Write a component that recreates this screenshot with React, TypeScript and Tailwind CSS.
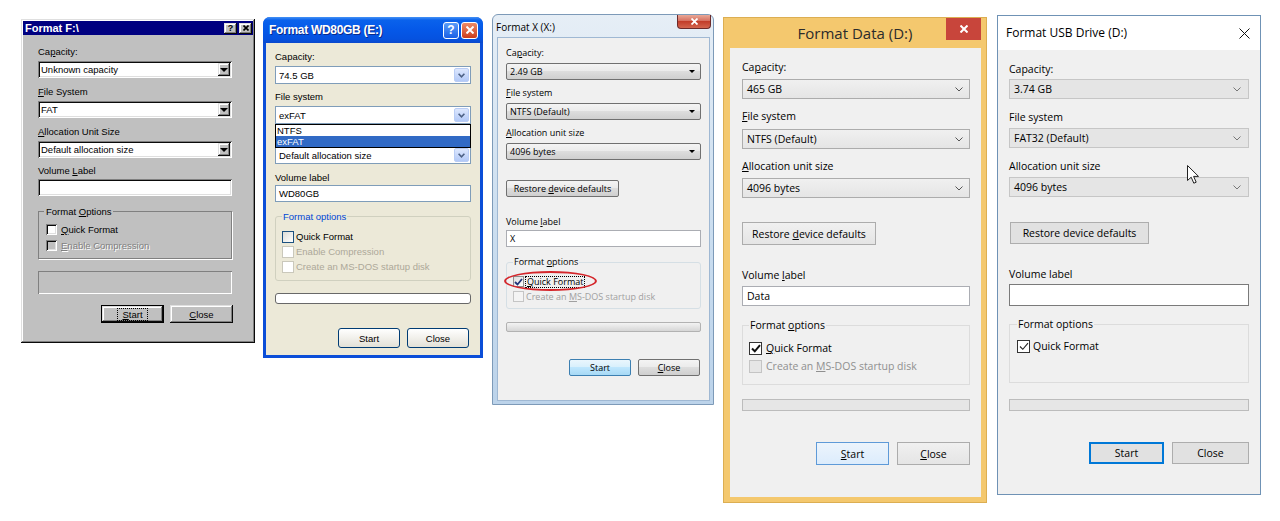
import React from "react";

type Kids = { children?: React.ReactNode };

const U = ({ children }: Kids) => (
  <span className="underline decoration-1 underline-offset-[1px]">{children}</span>
);

// classic 3D bevels
const raised98 =
  "shadow-[inset_-1px_-1px_#0a0a0a,inset_1px_1px_#dfdfdf,inset_-2px_-2px_#808080,inset_2px_2px_#ffffff]";
const sunken98 =
  "shadow-[inset_1px_1px_#808080,inset_-1px_-1px_#ffffff,inset_2px_2px_#0a0a0a,inset_-2px_-2px_#dfdfdf]";
const gray98 = "text-[#808080] [text-shadow:1px_1px_0_#ffffff]";

function Chevron({ color = "#444" }: { color?: string }) {
  return (
    <svg width="8" height="5" viewBox="0 0 8 5">
      <path d="M0.5 0.5 L4 4 L7.5 0.5" stroke={color} strokeWidth="1" fill="none" />
    </svg>
  );
}

function CloseGlyph({ size = 7, color = "#fff", width = 1.5 }: { size?: number; color?: string; width?: number }) {
  return (
    <svg width={size} height={size} viewBox={`0 0 ${size} ${size}`}>
      <path d={`M0.5 0.5 L${size - 0.5} ${size - 0.5} M${size - 0.5} 0.5 L0.5 ${size - 0.5}`} stroke={color} strokeWidth={width} />
    </svg>
  );
}

/* ---------- Windows 98 ---------- */

function Select98({ value }: { value: string }) {
  return (
    <div className={`h-[17px] bg-white flex items-center pl-[3px] pr-[2px] ${sunken98}`}>
      <span>{value}</span>
      <div className={`ml-auto w-[12px] h-[13px] bg-[#c0c0c0] flex items-center justify-center ${raised98}`}>
        <div className="w-0 h-0 border-x-[4px] border-x-transparent border-t-[4px] border-t-black" />
      </div>
    </div>
  );
}

function Check98({ disabled }: { disabled?: boolean }) {
  return <div className={`w-[11px] h-[11px] shrink-0 ${disabled ? "bg-[#c0c0c0]" : "bg-white"} ${sunken98}`} />;
}

function TitleBtn98({ children }: Kids) {
  return (
    <div className={`w-[13px] h-[11px] bg-[#c0c0c0] flex items-center justify-center text-[9px] font-bold leading-none text-black ${raised98}`}>
      {children}
    </div>
  );
}

function Win98Dialog() {
  return (
    <div className={`mt-[19px] ml-[21px] w-[234px] h-[324px] shrink-0 bg-[#c0c0c0] p-[2px] flex flex-col font-['Liberation_Sans',Arial,sans-serif] text-[9.5px] leading-[13px] text-black ${raised98}`}>
      <div className="h-[14px] bg-[#000080] flex items-center pl-[2px] pr-[1px]">
        <span className="text-white font-bold text-[11px] leading-[14px]">Format F:\</span>
        <div className="ml-auto flex gap-[2px]">
          <TitleBtn98>?</TitleBtn98>
          <TitleBtn98>
            <CloseGlyph size={6} color="#000" width={1.6} />
          </TitleBtn98>
        </div>
      </div>
      <div className="pl-[15px] w-[209px] flex flex-col">
        <div className="mt-[10px]">
          Ca<U>p</U>acity:
        </div>
        <div className="mt-[3px]">
          <Select98 value="Unknown capacity" />
        </div>
        <div className="mt-[7px]">
          <U>F</U>ile System
        </div>
        <div className="mt-[3px]">
          <Select98 value="FAT" />
        </div>
        <div className="mt-[7px]">
          <U>A</U>llocation Unit Size
        </div>
        <div className="mt-[3px]">
          <Select98 value="Default allocation size" />
        </div>
        <div className="mt-[6px]">
          Volume <U>L</U>abel
        </div>
        <div className={`mt-[2px] h-[17px] bg-white ${sunken98}`} />
        <fieldset className="mt-[9px] border border-[#808080] shadow-[1px_1px_0_#ffffff] pl-[7px] pb-[6px]">
          <legend className="-ml-[2px] px-[2px]">
            Format <U>O</U>ptions
          </legend>
          <div className="mt-[5px] flex items-center gap-[4px]">
            <Check98 />
            <span>
              <U>Q</U>uick Format
            </span>
          </div>
          <div className="mt-[3px] flex items-center gap-[4px]">
            <Check98 disabled />
            <span className={gray98}>
              <U>E</U>nable Compression
            </span>
          </div>
        </fieldset>
        <div className="mt-[12px] h-[23px] shadow-[inset_1px_1px_#808080,inset_-1px_-1px_#ffffff]" />
        <div className="mt-[11px] flex justify-end gap-[6px] -mr-[1px]">
          <div className={`w-[63px] h-[18px] border border-black bg-[#c0c0c0] flex items-center justify-center ${raised98}`}>
            <span className="border border-dotted border-black px-[4px] leading-[11px]">
              <U>S</U>tart
            </span>
          </div>
          <div className={`w-[63px] h-[18px] bg-[#c0c0c0] flex items-center justify-center ${raised98}`}>
            <span>
              <U>C</U>lose
            </span>
          </div>
        </div>
      </div>
    </div>
  );
}

/* ---------- Windows XP ---------- */

function SelectXP({ value }: { value: string }) {
  return (
    <div className="h-[18px] bg-white border border-[#7f9db9] flex items-center pl-[3px] pr-[1px]">
      <span>{value}</span>
      <div className="ml-auto w-[15px] h-[14px] rounded-[2px] border border-[#b9cdf5] bg-linear-to-b from-[#dde7fd] to-[#b3c9f7] flex items-center justify-center">
        <svg width="7" height="5" viewBox="0 0 7 5">
          <path d="M0.6 0.8 L3.5 3.8 L6.4 0.8" stroke="#4d6185" strokeWidth="1.6" fill="none" />
        </svg>
      </div>
    </div>
  );
}

function CheckXP({ disabled }: { disabled?: boolean }) {
  return (
    <div
      className={`w-[12px] h-[12px] shrink-0 border ${
        disabled ? "border-[#cac8bb] bg-white" : "border-[#1c5180] bg-linear-to-br from-[#dcdcd7] to-white"
      }`}
    />
  );
}

function ButtonXP({ children }: Kids) {
  return (
    <div className="w-[62px] h-[20px] rounded-[3px] border border-[#003c74] bg-linear-to-b from-white to-[#e3e1d7] flex items-center justify-center">
      {children}
    </div>
  );
}

function XPDialog() {
  return (
    <div className="mt-[17px] ml-[8px] w-[220px] h-[341px] shrink-0 rounded-t-[7px] bg-[#0b4ed8] flex flex-col overflow-hidden font-['Liberation_Sans',Tahoma,sans-serif] text-[9.5px] leading-[13px] text-black">
      <div className="h-[26px] shrink-0 flex items-center pl-[6px] pr-[5px] bg-[linear-gradient(to_bottom,#4592f5_0%,#0a62ec_12%,#0558e8_50%,#0552e0_85%,#0a48cc_100%)]">
        <span className="text-white font-bold text-[12px] tracking-[-0.3px] [text-shadow:1px_1px_0_#0a2a8a]">
          Format WD80GB (E:)
        </span>
        <div className="ml-auto flex gap-[2px]">
          <div className="w-[16px] h-[17px] rounded-[3px] border border-white bg-linear-to-b from-[#5a9cf8] to-[#1a5fe6] flex items-center justify-center text-white font-bold text-[12px] leading-none">
            ?
          </div>
          <div className="w-[17px] h-[17px] rounded-[3px] border border-white bg-linear-to-b from-[#ee8a66] to-[#cc3a18] flex items-center justify-center">
            <CloseGlyph size={8} width={2} />
          </div>
        </div>
      </div>
      <div className="mx-[3px] mb-[3px] flex-1 bg-[#ece9d8] pl-[9px] flex flex-col">
        <div className="w-[196px] flex flex-col">
          <div className="mt-[7px]">Capacity:</div>
          <div className="mt-[3px]">
            <SelectXP value="74.5 GB" />
          </div>
          <div className="mt-[6px]">File system</div>
          <div className="mt-[3px] relative z-10">
            <SelectXP value="exFAT" />
            {/* open drop-down list, covering the next label */}
            <div className="absolute left-0 right-0 top-full border border-black bg-white">
              <div className="h-[11px] leading-[11px] pl-[1px]">NTFS</div>
              <div className="h-[11px] leading-[11px] pl-[1px] bg-[#316ac5] text-white">exFAT</div>
            </div>
          </div>
          <div className="mt-[6px] h-[13px]" />
          <div className="mt-[3px]">
            <SelectXP value="Default allocation size" />
          </div>
          <div className="mt-[7px]">Volume label</div>
          <div className="mt-[1px] h-[17px] border border-[#7f9db9] bg-white flex items-center pl-[3px]">WD80GB</div>
          <fieldset className="mt-[8px] border border-[#d0d0bf] rounded-[3px] pl-[6px] pb-[6px]">
            <legend className="px-[1px] text-[#0046d5]">Format options</legend>
            <div className="mt-[6px] h-[15px] flex items-center gap-[2px]">
              <CheckXP />
              <span>Quick Format</span>
            </div>
            <div className="h-[15px] flex items-center gap-[2px]">
              <CheckXP disabled />
              <span className="text-[#aca899]">Enable Compression</span>
            </div>
            <div className="h-[15px] flex items-center gap-[2px]">
              <CheckXP disabled />
              <span className="text-[#aca899]">Create an MS-DOS startup disk</span>
            </div>
          </fieldset>
          <div className="mt-[12px] h-[11px] rounded-[3px] border border-[#686868] bg-white" />
          <div className="mt-[24px] flex justify-end gap-[7px] mr-[2px]">
            <ButtonXP>Start</ButtonXP>
            <ButtonXP>Close</ButtonXP>
          </div>
        </div>
      </div>
    </div>
  );
}

/* ---------- Windows Vista ---------- */

const vistaGloss = "bg-[linear-gradient(to_bottom,#f4f4f4_0%,#ebebeb_45%,#dddddd_50%,#cfcfcf_100%)]";

function SelectVista({ value }: { value: string }) {
  return (
    <div className={`h-[17px] rounded-[2px] border border-[#707070] ${vistaGloss} flex items-center pl-[3px] pr-[5px]`}>
      <span>{value}</span>
      <div className="ml-auto w-0 h-0 border-x-[3px] border-x-transparent border-t-[3px] border-t-black" />
    </div>
  );
}

function VistaDialog() {
  return (
    <div className="mt-[14px] ml-[9px] w-[222px] h-[391px] shrink-0 rounded-t-[6px] border border-[#7d9ab8] bg-linear-to-b from-[#e6eef6] via-[#cddff0] to-[#bcd3ea] flex flex-col font-['Open_Sans','Noto_Sans',sans-serif] text-[9px] leading-[12px] text-black">
      <div className="h-[22px] shrink-0 flex items-start pl-[3px]">
        <span className="mt-[6px] text-[10px] leading-[13px]">Format X (X:)</span>
        <div className="ml-auto mr-[2px] w-[34px] h-[14px] rounded-b-[4px] border border-t-0 border-[#6b2a2a] bg-[linear-gradient(to_bottom,#e9a897_0%,#d67060_45%,#c23d2a_50%,#d3654e_100%)] flex items-center justify-center">
          <CloseGlyph size={7} width={1.8} />
        </div>
      </div>
      <div className="ml-[4px] mr-[3px] mb-[3px] flex-1 border border-[#9fb8d3] bg-[#f0f0f0] pl-[8px] flex flex-col">
        <div className="w-[195px] flex flex-col">
          <div className="mt-[9px]">
            Ca<U>p</U>acity:
          </div>
          <div className="mt-[4px]">
            <SelectVista value="2.49 GB" />
          </div>
          <div className="mt-[7px]">
            <U>F</U>ile system
          </div>
          <div className="mt-[4px]">
            <SelectVista value="NTFS (Default)" />
          </div>
          <div className="mt-[7px]">
            <U>A</U>llocation unit size
          </div>
          <div className="mt-[4px]">
            <SelectVista value="4096 bytes" />
          </div>
          <div className={`mt-[20px] w-[113px] h-[17px] rounded-[2px] border border-[#707070] ${vistaGloss} flex items-center justify-center`}>
            <span>
              Restore <U>d</U>evice defaults
            </span>
          </div>
          <div className="mt-[19px]">
            Volume <U>l</U>abel
          </div>
          <div className="mt-[2px] h-[17px] border border-[#abadb3] bg-white flex items-center pl-[3px]">X</div>
          <fieldset className="mt-[9px] border border-[#d5dfe5] rounded-[3px] pl-[6px] pb-[4px]">
            <legend className="px-[1px]">
              Format <U>o</U>ptions
            </legend>
            <div className="mt-[6px] h-[15px] flex items-center gap-[1px] relative">
              <div className="w-[11px] h-[11px] shrink-0 border border-[#8e8f8f] bg-linear-to-br from-[#dedede] to-white flex items-center justify-center">
                <svg width="9" height="8" viewBox="0 0 9 8">
                  <path d="M1 4 L3.5 6.5 L8 1" stroke="#21357a" strokeWidth="1.8" fill="none" />
                </svg>
              </div>
              <span className="border border-dotted border-black px-[1px] leading-[10px]">
                <U>Q</U>uick Format
              </span>
              <div className="absolute left-[-9px] top-[-3px] w-[93px] h-[20px] rounded-[50%] border-2 border-[#d4262b]" />
            </div>
            <div className="h-[15px] flex items-center gap-[2px]">
              <div className="w-[11px] h-[11px] shrink-0 border border-[#c5c5c5] bg-[#f4f4f4]" />
              <span className="text-[#a0a0a0]">
                Create an <U>M</U>S-DOS startup disk
              </span>
            </div>
          </fieldset>
          <div className="mt-[13px] h-[10px] rounded-[2px] border border-[#b2b2b2] bg-linear-to-b from-[#f3f3f3] to-[#d6d6d6]" />
          <div className="mt-[27px] flex justify-end gap-[7px] mr-[1px]">
            <div className="w-[62px] h-[17px] rounded-[2px] border border-[#3c7fb1] bg-[linear-gradient(to_bottom,#eaf6fd_0%,#d9f0fc_45%,#bee6fd_50%,#a7d9f5_100%)] flex items-center justify-center">
              Start
            </div>
            <div className={`w-[62px] h-[17px] rounded-[2px] border border-[#707070] ${vistaGloss} flex items-center justify-center`}>
              <span>
                <U>C</U>lose
              </span>
            </div>
          </div>
        </div>
      </div>
    </div>
  );
}

/* ---------- Windows 8 ---------- */

function SelectWin8({ value }: { value: string }) {
  return (
    <div className="h-[20px] border border-[#acacac] bg-linear-to-b from-[#f0f0f0] to-[#e5e5e5] flex items-center pl-[4px] pr-[6px]">
      <span>{value}</span>
      <span className="ml-auto flex">
        <Chevron color="#555" />
      </span>
    </div>
  );
}

function Win8Dialog() {
  return (
    <div className="mt-[17px] ml-[9px] w-[264px] h-[486px] shrink-0 border border-[#dcae52] bg-[#f4c86e] flex flex-col font-['Open_Sans','Noto_Sans',sans-serif] text-[10.5px] leading-[16px] text-black">
      <div className="h-[30px] shrink-0 relative flex items-center justify-center">
        <span className="text-[15px] leading-[20px] text-[#2b2b2b]">Format Data (D:)</span>
        <div className="absolute right-[5px] top-0 w-[35px] h-[22px] bg-[#c8453b] flex items-center justify-center">
          <CloseGlyph size={8} width={2} />
        </div>
      </div>
      <div className="ml-[6px] mr-[5px] mb-[5px] flex-1 bg-[#f0f0f0] pl-[12px] flex flex-col">
        <div className="w-[228px] flex flex-col">
          <div className="mt-[11px]">
            Ca<U>p</U>acity:
          </div>
          <div className="mt-[4px]">
            <SelectWin8 value="465 GB" />
          </div>
          <div className="mt-[9px]">
            <U>F</U>ile system
          </div>
          <div className="mt-[5px]">
            <SelectWin8 value="NTFS (Default)" />
          </div>
          <div className="mt-[9px]">
            <U>A</U>llocation unit size
          </div>
          <div className="mt-[4px]">
            <SelectWin8 value="4096 bytes" />
          </div>
          <div className="mt-[24px] w-[134px] h-[23px] border border-[#acacac] bg-linear-to-b from-[#f0f0f0] to-[#e5e5e5] flex items-center justify-center">
            <span>
              Restore <U>d</U>evice defaults
            </span>
          </div>
          <div className="mt-[22px]">
            Volume <U>l</U>abel
          </div>
          <div className="mt-[3px] h-[20px] border border-[#abadb3] bg-white flex items-center pl-[4px]">Data</div>
          <fieldset className="mt-[11px] border border-[#dcdcdc] pl-[6px] pb-[9px]">
            <legend className="px-[1px]">
              Format <U>o</U>ptions
            </legend>
            <div className="mt-[6px] h-[18px] flex items-center gap-[4px]">
              <div className="w-[13px] h-[13px] shrink-0 border border-[#333] bg-white flex items-center justify-center">
                <svg width="10" height="9" viewBox="0 0 10 9">
                  <path d="M1 4.5 L3.8 7.3 L9 1.2" stroke="#111" strokeWidth="2" fill="none" />
                </svg>
              </div>
              <span>
                <U>Q</U>uick Format
              </span>
            </div>
            <div className="h-[18px] flex items-center gap-[4px]">
              <div className="w-[13px] h-[13px] shrink-0 border border-[#c4c4c4] bg-[#e6e6e6]" />
              <span className="text-[#8f8f8f]">
                Create an <U>M</U>S-DOS startup disk
              </span>
            </div>
          </fieldset>
          <div className="mt-[14px] h-[12px] border border-[#bcbcbc] bg-[#e6e6e6]" />
          <div className="mt-[31px] flex justify-end gap-[8px]">
            <div className="w-[73px] h-[23px] border border-[#5e9ad8] bg-linear-to-b from-[#ecf4fc] to-[#dcecfc] flex items-center justify-center">
              <span>
                <U>S</U>tart
              </span>
            </div>
            <div className="w-[73px] h-[23px] border border-[#acacac] bg-linear-to-b from-[#f0f0f0] to-[#e5e5e5] flex items-center justify-center">
              <span>
                <U>C</U>lose
              </span>
            </div>
          </div>
        </div>
      </div>
    </div>
  );
}

/* ---------- Windows 10 ---------- */

function SelectWin10({ value }: { value: string }) {
  return (
    <div className="h-[20px] border border-[#c6c6c6] bg-[#e5e5e5] flex items-center pl-[4px] pr-[7px]">
      <span>{value}</span>
      <span className="ml-auto flex">
        <Chevron color="#777" />
      </span>
    </div>
  );
}

function Win10Dialog() {
  return (
    <div className="relative mt-[15px] ml-[10px] w-[264px] h-[480px] shrink-0 border border-[#6f92b5] bg-[#f0f0f0] flex flex-col font-['Open_Sans','Noto_Sans',sans-serif] text-[10.5px] leading-[16px] text-black">
      <div className="h-[34px] shrink-0 bg-white flex items-center pl-[8px] pr-[10px]">
        <span className="text-[12px] leading-[16px]">Format USB Drive (D:)</span>
        <span className="ml-auto flex">
          <CloseGlyph size={11} color="#111" width={1} />
        </span>
      </div>
      <div className="pl-[11px] flex flex-col">
        <div className="w-[240px] flex flex-col">
          <div className="mt-[11px]">Capacity:</div>
          <div className="mt-[2px]">
            <SelectWin10 value="3.74 GB" />
          </div>
          <div className="mt-[10px]">File system</div>
          <div className="mt-[3px]">
            <SelectWin10 value="FAT32 (Default)" />
          </div>
          <div className="mt-[10px]">Allocation unit size</div>
          <div className="mt-[3px]">
            <SelectWin10 value="4096 bytes" />
          </div>
          <div className="mt-[25px] ml-[1px] w-[139px] h-[22px] border border-[#adadad] bg-[#e1e1e1] flex items-center justify-center">
            Restore device defaults
          </div>
          <div className="mt-[22px]">Volume label</div>
          <div className="mt-[2px] h-[22px] border border-[#7a7a7a] bg-white" />
          <fieldset className="mt-[10px] h-[67px] border border-[#dcdcdc] pl-[7px]">
            <legend className="px-[1px]">Format options</legend>
            <div className="mt-[5px] h-[18px] flex items-center gap-[3px]">
              <div className="w-[13px] h-[13px] shrink-0 border border-[#333] bg-white flex items-center justify-center">
                <svg width="10" height="9" viewBox="0 0 10 9">
                  <path d="M1 4.5 L3.8 7.3 L9 1.2" stroke="#222" strokeWidth="1.1" fill="none" />
                </svg>
              </div>
              <span>Quick Format</span>
            </div>
          </fieldset>
          <div className="mt-[16px] h-[12px] border border-[#bcbcbc] bg-[#e6e6e6]" />
          <div className="mt-[31px] flex justify-end gap-[8px]">
            <div className="w-[75px] h-[22px] border-2 border-[#0078d7] bg-[#e1e1e1] flex items-center justify-center">
              Start
            </div>
            <div className="w-[77px] h-[22px] border border-[#adadad] bg-[#e1e1e1] flex items-center justify-center">
              Close
            </div>
          </div>
        </div>
      </div>
      {/* mouse pointer resting over the allocation box */}
      <svg className="absolute left-[189px] top-[149px]" width="13" height="20" viewBox="0 0 13 20">
        <path
          d="M0.5 0.5 L0.5 15.5 L4.2 12.2 L6.8 18.2 L9.2 17.2 L6.6 11.4 L11.5 11.4 Z"
          fill="#fff"
          stroke="#222"
          strokeWidth="1"
          strokeLinejoin="round"
        />
      </svg>
    </div>
  );
}

export default function App() {
  return (
    <div className="w-[1280px] h-[521px] bg-white flex items-start overflow-hidden">
      <Win98Dialog />
      <XPDialog />
      <VistaDialog />
      <Win8Dialog />
      <Win10Dialog />
    </div>
  );
}
